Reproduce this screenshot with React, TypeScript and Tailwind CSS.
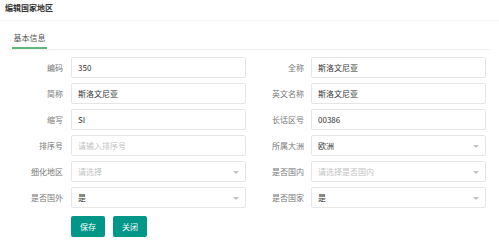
import React from "react";

type Field = {
  label: string;
  value?: string;
  placeholder?: string;
  select?: boolean;
};

const rows: [Field, Field][] = [
  [
    { label: "编码", value: "350" },
    { label: "全称", value: "斯洛文尼亚" },
  ],
  [
    { label: "简称", value: "斯洛文尼亚" },
    { label: "英文名称", value: "斯洛文尼亚" },
  ],
  [
    { label: "缩写", value: "SI" },
    { label: "长话区号", value: "00386" },
  ],
  [
    { label: "排序号", placeholder: "请输入排序号" },
    { label: "所属大洲", value: "欧洲", select: true },
  ],
  [
    { label: "细化地区", placeholder: "请选择", select: true },
    { label: "是否国内", placeholder: "请选择是否国内", select: true },
  ],
  [
    { label: "是否国外", value: "是", select: true },
    { label: "是否国家", value: "是", select: true },
  ],
];

const Input = ({ f }: { f: Field }) => (
  <div className="relative flex h-[21px] w-[175px] items-center rounded-[2px] border border-[#e6e6e6] bg-white pl-[6px]">
    {f.value ? (
      <span className="text-[#333]">{f.value}</span>
    ) : (
      <span className="text-[#c2c2c2]">{f.placeholder}</span>
    )}
    {f.select && (
      <span className="absolute right-[6px] top-[9px] h-0 w-0 border-x-[3px] border-t-[3px] border-x-transparent border-t-[#c2c2c2]" />
    )}
  </div>
);

export default function App() {
  return (
    <div
      className="h-[249px] w-[499px] bg-white text-[8px] leading-none text-[#777]"
      style={{ fontFamily: '"Noto Sans CJK SC", "Noto Sans", sans-serif' }}
    >
      <div className="flex h-[21px] items-center border-b border-[#f6f6f6] px-[5px] pb-[4px] text-[8px] font-bold text-[#333]">
        编辑国家地区
      </div>

      <div className="mx-[8px] mt-[7px] border-b border-[#f2f2f2]">
        <div className="ml-[4px] flex h-[21px] w-[35px] items-center justify-center border-b-2 border-[#5FB878] text-[#555]">
          基本信息
        </div>
      </div>

      <div className="mt-[7px] flex flex-col gap-[5px]">
        {rows.map(([l, r], i) => (
          <div key={i} className="flex items-center">
            <div className="flex items-center">
              <span className="w-[63px] text-right">{l.label}</span>
              <div className="ml-[8px]">
                <Input f={l} />
              </div>
            </div>
            <div className="ml-[6px] flex items-center">
              <span className="w-[52px] text-right">{r.label}</span>
              <div className="ml-[7px]">
                <Input f={r} />
              </div>
            </div>
          </div>
        ))}
      </div>

      <div className="ml-[71px] mt-[8px] flex gap-[8px]">
        <button className="h-[21px] w-[34px] rounded-[2px] bg-[#009688] text-white">
          保存
        </button>
        <button className="h-[21px] w-[34px] rounded-[2px] bg-[#009688] text-white">
          关闭
        </button>
      </div>
    </div>
  );
}
